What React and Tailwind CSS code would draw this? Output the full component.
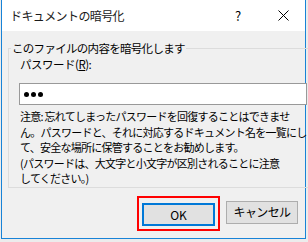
export default function App() {
  const font = { fontFamily: '"Noto Sans CJK JP", "Noto Sans", sans-serif' };

  return (
    <div className="w-[308px] h-[242px] bg-[#ececec] pl-px" style={font}>
      <div className="w-[305px] h-[239px] flex flex-col bg-[#f0f0f0] border-x border-b border-[#1883d7] text-black">
        {/* Title bar */}
        <div className="h-[31px] bg-white flex items-center shrink-0">
          <div className="pl-[8px] text-[12px] leading-none tracking-[-0.6px] text-[#1a1a1a]">
            ドキュメントの暗号化
          </div>
          <div className="ml-auto w-[46px] flex justify-center text-[13px] leading-none">?</div>
          <div className="w-[44px] flex justify-center">
            <svg width="11" height="11" viewBox="0 0 11 11">
              <path d="M0.5 0.5 L10.5 10.5 M10.5 0.5 L0.5 10.5" stroke="#000" strokeWidth="1" fill="none" />
            </svg>
          </div>
        </div>

        {/* Group box */}
        <fieldset className="mt-[10px] ml-[6px] mr-[5px] border border-[#dcdcdc] pl-[11px] pr-[8px] pb-0">
          <legend className="-ml-[9px] px-[1px] text-[11.5px] leading-[14px] tracking-[-0.7px]">
            このファイルの内容を暗号化します
          </legend>
          <div className="pt-[2px] text-[11.5px] leading-[14px] tracking-[-0.5px]">
            パスワード(<span className="underline">R</span>):
          </div>
          <div className="mt-[12px] -ml-px h-[22px] bg-white border border-[#999] flex items-center pl-[4px] gap-[2px]">
            <span className="w-[5px] h-[5px] rounded-full bg-black" />
            <span className="w-[5px] h-[5px] rounded-full bg-black" />
            <span className="w-[5px] h-[5px] rounded-full bg-black" />
          </div>
          <p className="mt-[4px] text-[11px] leading-[15.5px] tracking-[-0.75px] whitespace-nowrap">
            注意: 忘れてしまったパスワードを回復することはできませ
            <br />
            ん。パスワードと、それに対応するドキュメント名を一覧にし
            <br />
            て、安全な場所に保管することをお勧めします。
            <br />
            (パスワードは、大文字と小文字が区別されることに注意
            <br />
            してください。)
          </p>
        </fieldset>

        {/* Buttons */}
        <div className="mt-[13px] flex justify-end gap-[11px] pr-[7px]">
          <div className="relative">
            <button className="w-[73px] h-[23px] bg-[#e1e1e1] border-2 border-[#0078d7] text-[12px] leading-none">
              OK
            </button>
            <div className="absolute -inset-[5px] border-2 border-[#ff0000] pointer-events-none" />
          </div>
          <button className="w-[72px] h-[23px] bg-[#e1e1e1] border border-[#adadad] text-[12px] leading-none tracking-[-0.6px]">
            キャンセル
          </button>
        </div>
      </div>
    </div>
  );
}
